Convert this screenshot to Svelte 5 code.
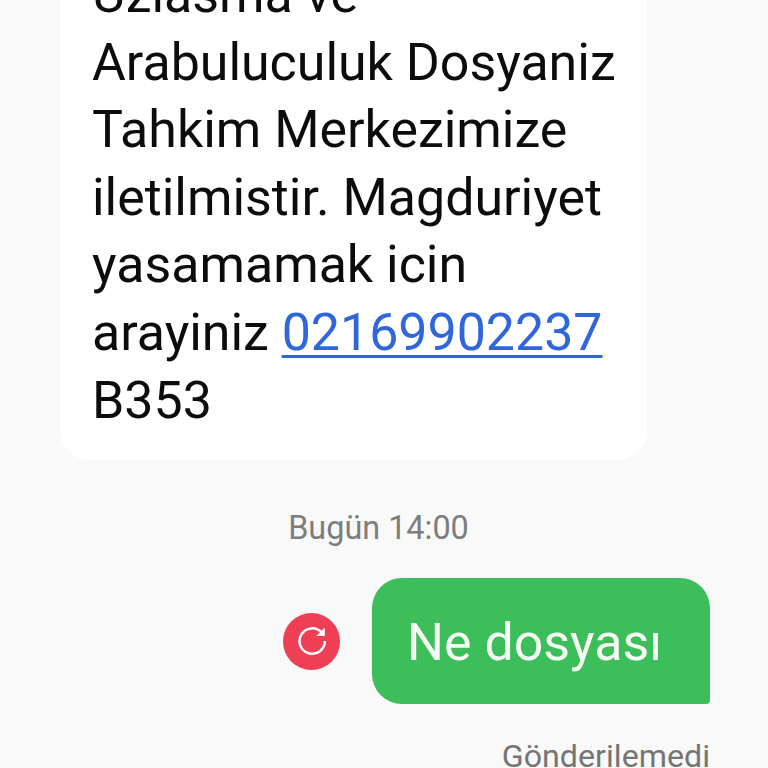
<script>
	const lines = ["Uzlasma ve", "Arabuluculuk Dosyaniz", "Tahkim Merkezimize", "iletilmistir. Magduriyet", "yasamamak icin"];
</script>

<div class="screen">
	<div class="thread">
		<div class="incoming">
			{#each lines as line}
				<div class="line">{line}</div>
			{/each}
			<div class="line">arayiniz <span class="link">02169902237</span></div>
			<div class="line">B353</div>
		</div>

		<div class="date">Bugün 14:00</div>

		<div class="outgoing-row">
			<div class="retry">
				<svg width="30" height="30" viewBox="0 0 30 30" fill="none">
					<path d="M24.6 6.5A12.7 12.7 0 1 0 27.9 15" stroke="#fff" stroke-width="2.5" />
					<path d="M27.8 1.5V10H19.3Z" fill="#fff" />
				</svg>
			</div>
			<div class="outgoing">Ne dosyası</div>
		</div>

		<div class="status">Gönderilemedi</div>
	</div>
</div>

<style>
	:global(body) {
		background: #f9f9f9;
	}

	.screen {
		width: 768px;
		height: 768px;
		overflow: hidden;
		background: #f9f9f9;
		font-family: Roboto, "Liberation Sans", sans-serif;
	}

	.thread {
		margin-top: -40px;
		padding: 0 58px 0 60px;
		display: flex;
		flex-direction: column;
	}

	.incoming {
		width: 587px;
		box-sizing: border-box;
		padding: 1px 32px 26px;
		background: #fff;
		border-radius: 0 0 30px 30px;
		color: #0c0c0c;
		font-size: 51.9px;
		line-height: 67.6px;
	}

	.line {
		white-space: nowrap;
	}

	.link {
		color: #2f66dc;
		text-decoration: underline;
		text-decoration-thickness: 3px;
		text-underline-offset: 5px;
	}

	.date {
		margin-top: 47px;
		text-align: center;
		width: 637px;
		color: #7d7d7d;
		font-size: 32.4px;
		line-height: 42px;
	}

	.outgoing-row {
		margin-top: 29px;
		display: flex;
		justify-content: flex-end;
		align-items: center;
		gap: 32px;
	}

	.retry {
		width: 57px;
		height: 57px;
		border-radius: 50%;
		background: #ee3f54;
		display: flex;
		align-items: center;
		justify-content: center;
	}

	.outgoing {
		width: 338px;
		height: 126px;
		box-sizing: border-box;
		padding-left: 35px;
		background: #3cbe5a;
		border-radius: 30px 30px 4px 30px;
		color: #f6fbf4;
		font-size: 51.9px;
		line-height: 130px;
		white-space: nowrap;
	}

	.status {
		margin-top: 31px;
		text-align: right;
		color: #757575;
		font-size: 32.2px;
		line-height: 42px;
	}
</style>
